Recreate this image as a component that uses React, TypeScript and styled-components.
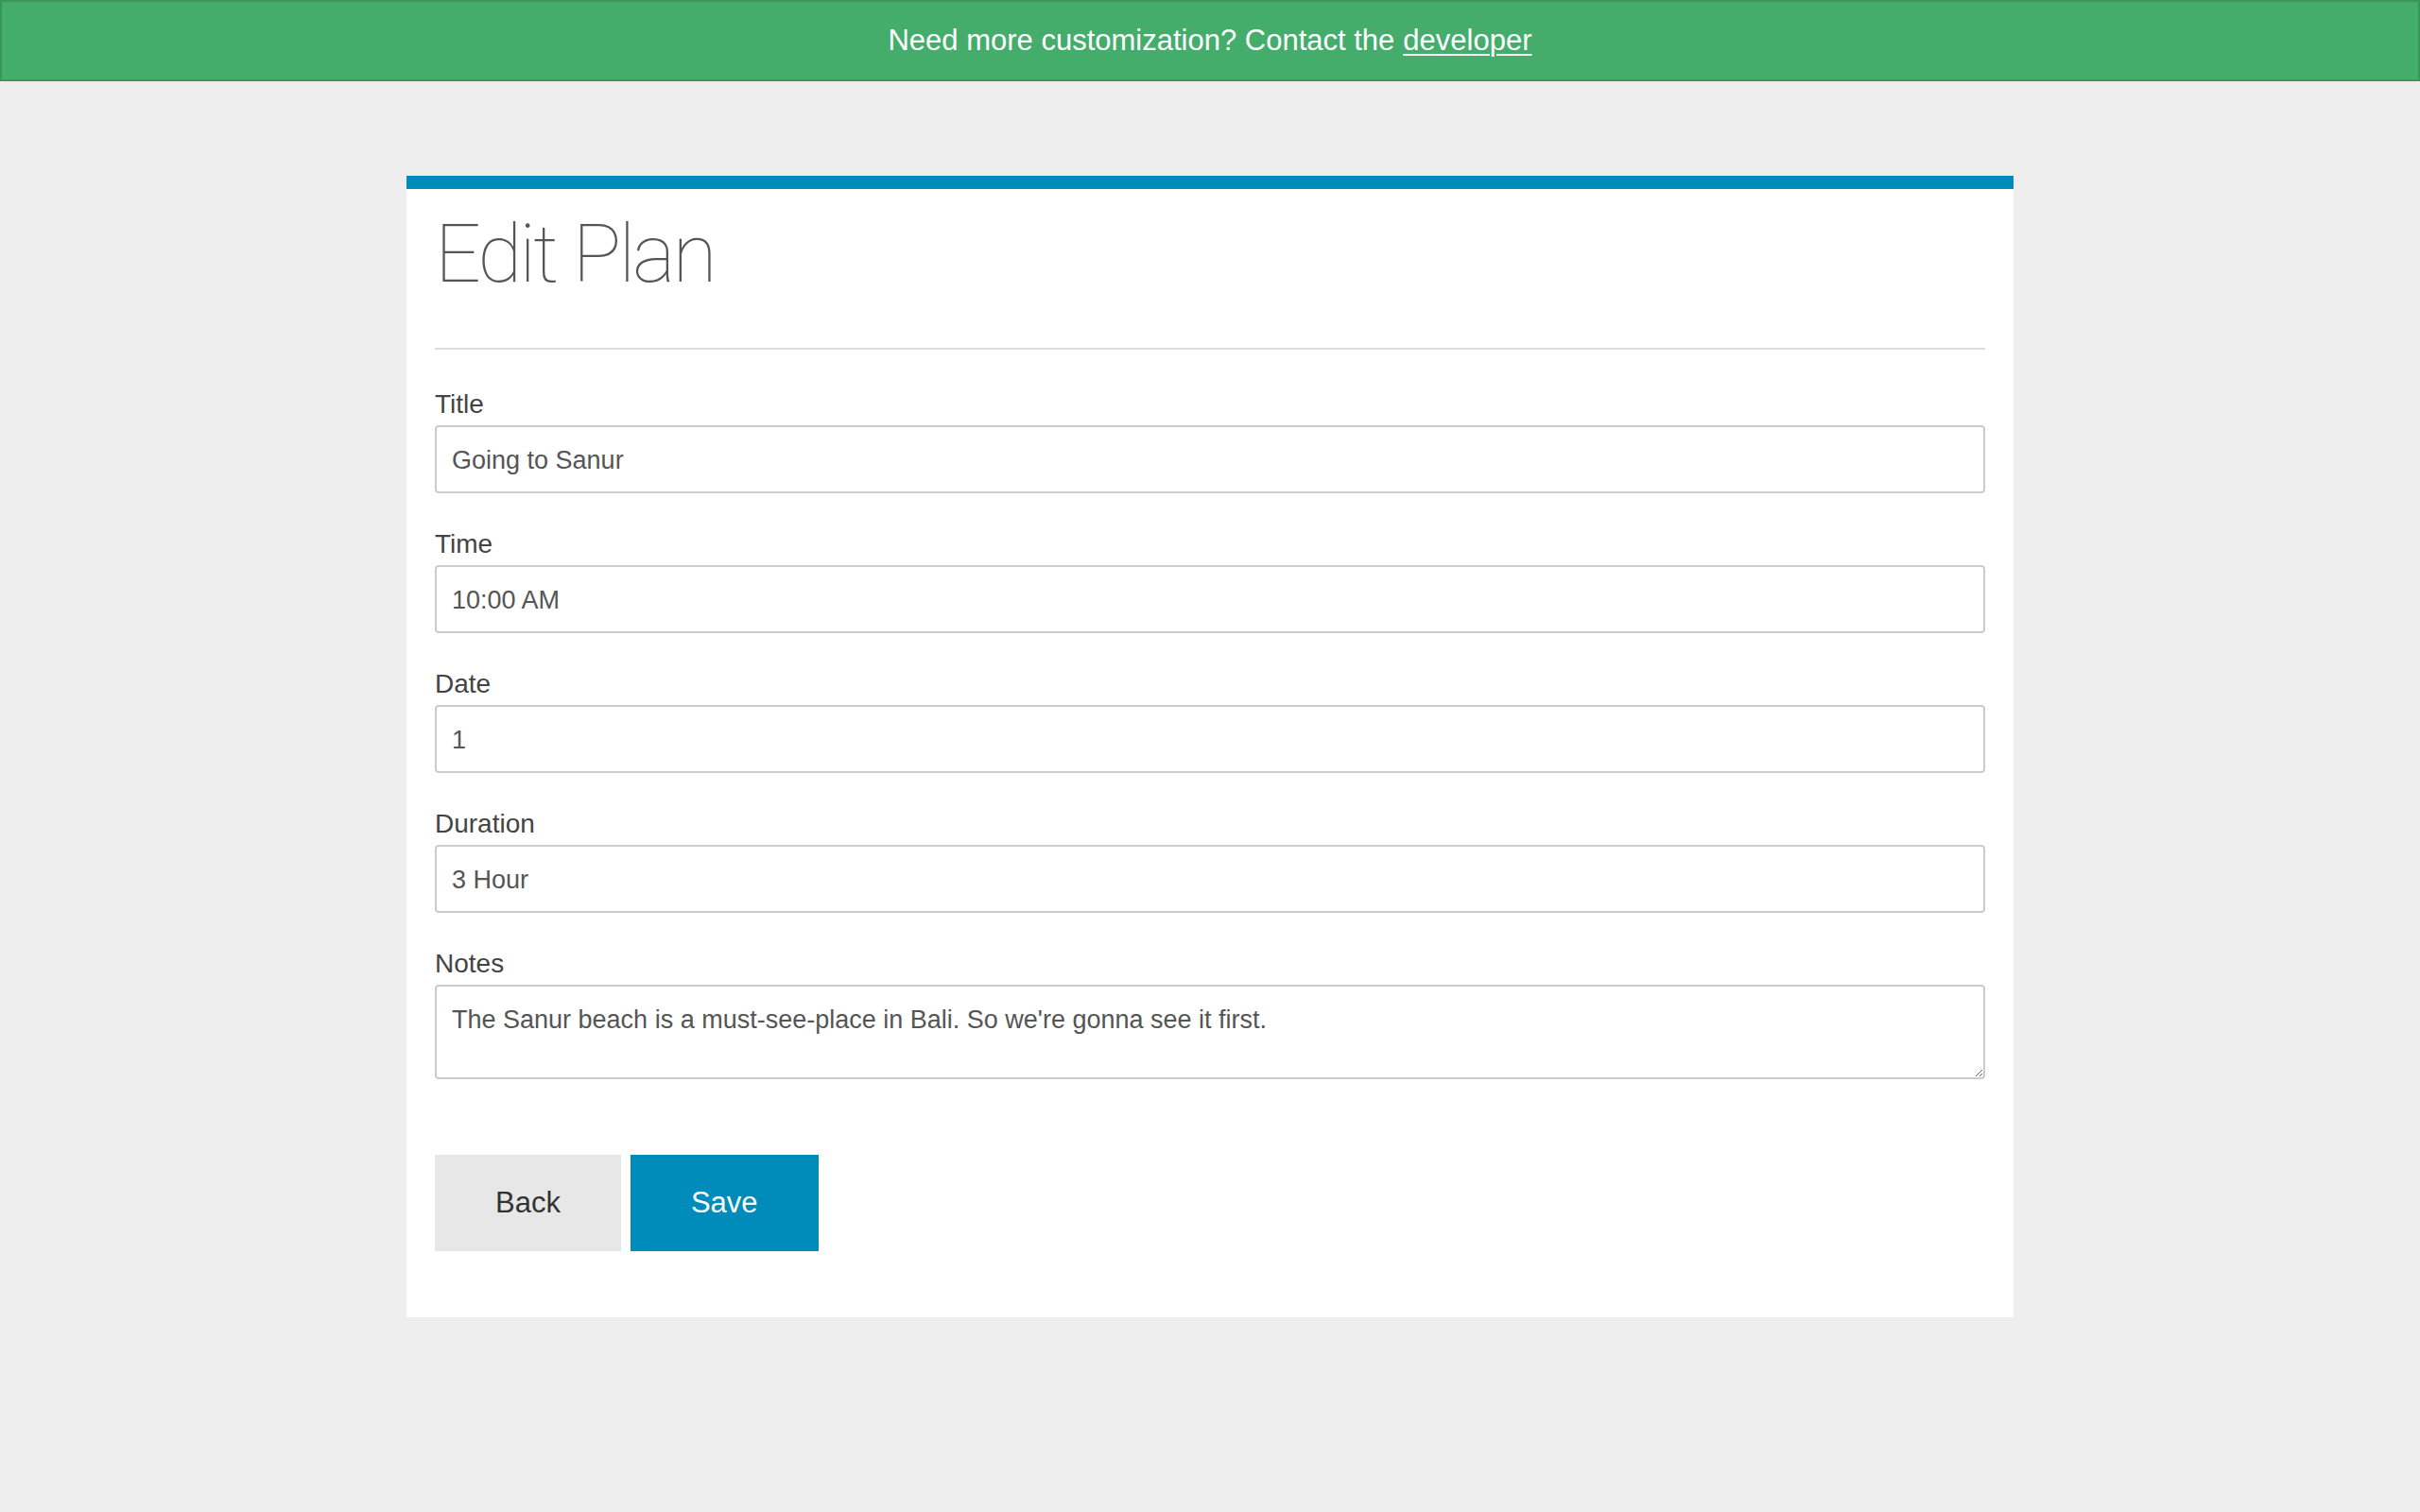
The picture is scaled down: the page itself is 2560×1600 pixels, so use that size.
import React from "react";
import styled, { createGlobalStyle } from "styled-components";

const GlobalStyle = createGlobalStyle`
  html, body {
    margin: 0;
    padding: 0;
    background: #eeeeee;
  }
  body {
    font-family: "Liberation Sans", Arial, sans-serif;
    color: #444444;
  }
  * { box-sizing: border-box; }
`;

const Banner = styled.div`
  height: 86px;
  background: #44ad6b;
  border: 2px solid #3a955d;
  display: flex;
  align-items: center;
  justify-content: center;
  color: #ffffff;
  font-size: 31px;
  line-height: 40px;
`;

const BannerLink = styled.a`
  color: #ffffff;
  text-decoration: underline;
  text-decoration-thickness: 2px;
  text-underline-offset: 4px;
  margin-left: 9px;
`;

const Main = styled.main`
  display: flex;
  justify-content: center;
  padding: 100px 0 200px;
`;

const Card = styled.section`
  width: 1700px;
  background: #ffffff;
  border-top: 14px solid #008cba;
  padding: 14px 30px 70px;
`;

const Heading = styled.h1`
  margin: 0;
  font-family: Roboto, "Liberation Sans", sans-serif;
  font-weight: 100;
  font-size: 86px;
  line-height: 110px;
  letter-spacing: -3px;
  color: #555555;
`;

const Divider = styled.hr`
  border: 0;
  height: 2px;
  background: #dddddd;
  margin: 44px 0 40px;
`;

const Form = styled.form`
  display: flex;
  flex-direction: column;
`;

const Field = styled.div`
  display: flex;
  flex-direction: column;
  margin-bottom: 36px;
`;

const Label = styled.label`
  font-size: 28px;
  line-height: 36px;
  color: #444444;
  margin-bottom: 4px;
`;

const fieldBase = `
  width: 100%;
  border: 2px solid #cccccc;
  border-radius: 4px;
  background: #ffffff;
  font-family: "Liberation Sans", Arial, sans-serif;
  font-size: 27px;
  color: #555555;
  outline: none;
`;

const TextInput = styled.input`
  ${fieldBase}
  height: 72px;
  padding: 3px 16px 0;
`;

const TextArea = styled.textarea`
  ${fieldBase}
  height: 100px;
  padding: 15px 16px 11px;
  line-height: 40px;
  resize: vertical;
`;

const Actions = styled.div`
  display: flex;
  gap: 10px;
  margin-top: 44px;
`;

const Button = styled.button<{ $primary?: boolean }>`
  border: 0;
  border-radius: 0;
  font-family: "Liberation Sans", Arial, sans-serif;
  font-size: 31px;
  line-height: 36px;
  padding: 33px 64px;
  background: ${(p) => (p.$primary ? "#008cba" : "#e7e7e7")};
  color: ${(p) => (p.$primary ? "#ffffff" : "#333333")};
  cursor: pointer;
`;

const fields: { label: string; value: string }[] = [
  { label: "Title", value: "Going to Sanur" },
  { label: "Time", value: "10:00 AM" },
  { label: "Date", value: "1" },
  { label: "Duration", value: "3 Hour" },
];

export default function App() {
  return (
    <>
      <GlobalStyle />
      <Banner>
        Need more customization? Contact the
        <BannerLink href="#">developer</BannerLink>
      </Banner>
      <Main>
        <Card>
          <Heading>Edit Plan</Heading>
          <Divider />
          <Form onSubmit={(e) => e.preventDefault()}>
            {fields.map((f) => (
              <Field key={f.label}>
                <Label>{f.label}</Label>
                <TextInput type="text" defaultValue={f.value} />
              </Field>
            ))}
            <Field>
              <Label>Notes</Label>
              <TextArea defaultValue="The Sanur beach is a must-see-place in Bali. So we're gonna see it first." />
            </Field>
            <Actions>
              <Button type="button">Back</Button>
              <Button type="submit" $primary>
                Save
              </Button>
            </Actions>
          </Form>
        </Card>
      </Main>
    </>
  );
}
